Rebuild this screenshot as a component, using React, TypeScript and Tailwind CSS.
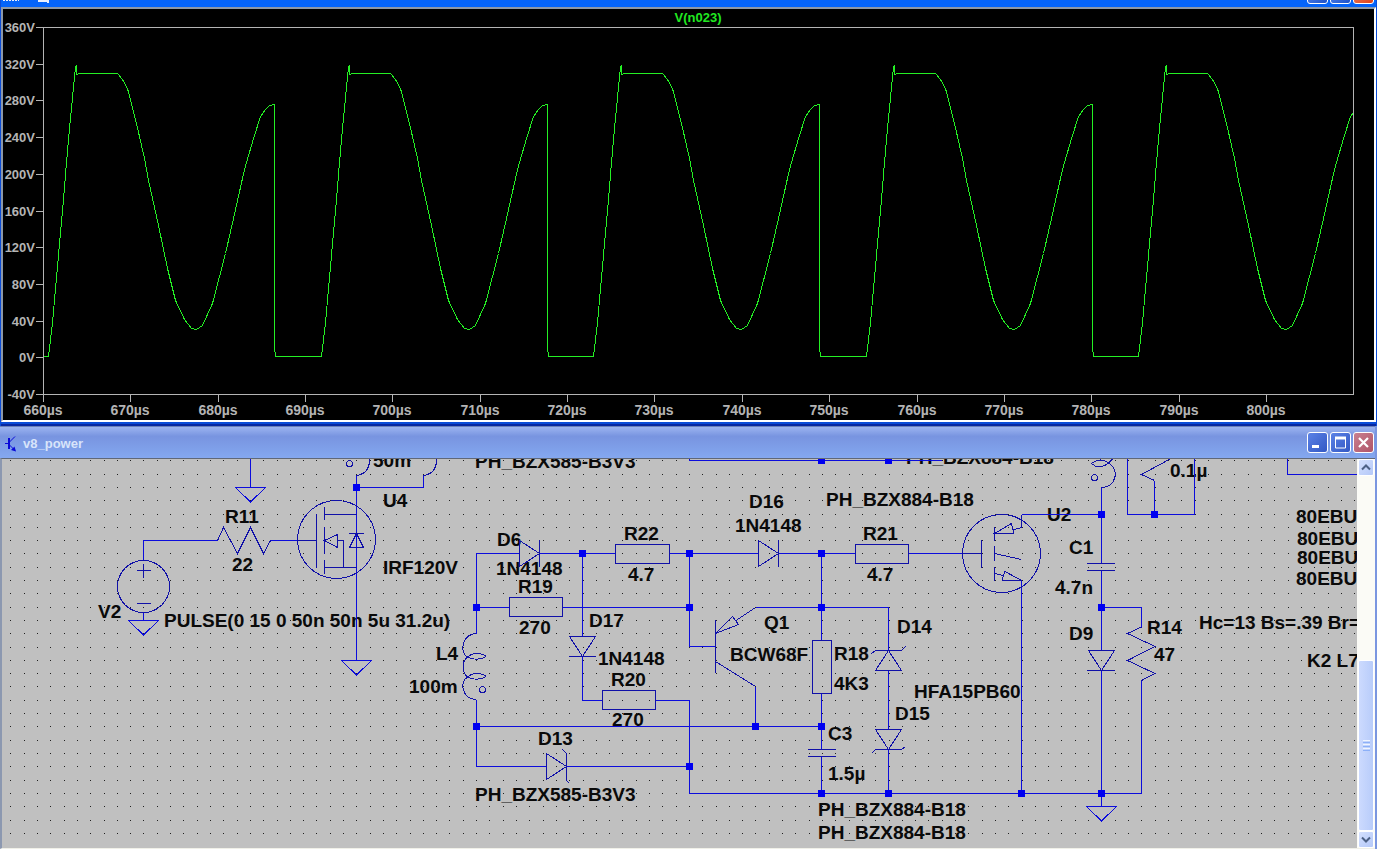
import { ReactNode } from 'react';

type Label = [ number, number, string ];
type Point = [ number, number ];

const voltTicks = [ 360, 320, 280, 240, 200, 160, 120, 80, 40, 0, -40 ];
const timeTicks = [ 660, 670, 680, 690, 700, 710, 720, 730, 740, 750, 760, 770, 780, 790, 800 ];

// One switching cycle of V(n023)
const cycle: Point[] = [
    [ 48, 356 ], [ 52, 322 ], [ 57, 266 ], [ 60, 232 ], [ 63, 199 ], [ 66, 162 ], [ 69, 128 ], [ 75, 66 ], [ 76, 65 ],
    [ 76, 74 ], [ 79, 73 ], [ 117, 73 ], [ 122, 79 ], [ 127, 88 ], [ 136, 123 ], [ 144, 158 ], [ 148, 180 ],
    [ 158, 225 ], [ 167, 268 ], [ 175, 300 ], [ 184, 319 ], [ 191, 328 ], [ 196, 329 ], [ 202, 325 ], [ 212, 303 ],
    [ 225, 253 ], [ 233, 218 ], [ 244, 169 ], [ 253, 138 ], [ 260, 116 ], [ 265, 109 ], [ 269, 105 ], [ 274, 104 ],
    [ 274, 346 ], [ 275, 356 ],
];
const period = 272.5;

const tracePoints = [ 0, 1, 2, 3, 4 ]
    .flatMap( ( n ) => cycle.map( ( [ x, y ] ) => `${ Math.round( x + n * period ) + 0.5 },${ y + 0.5 }` ) )
    .join( ' ' );

// Snap grid of the schematic sheet
const pitch = 13.305;
const gridDots = () =>
{
    let d = '';
    for ( let row = 0; row < 29; row++ )
    {
        for ( let col = 0; col < 102; col++ )
        {
            const x = Math.floor( 10.9 + col * pitch );
            const y = Math.floor( 460.8 + row * pitch );
            d += `M${ x } ${ y }h1v1h-1z`;
        }
    }
    return d;
};

const wires = [
    'M250.5 459V487.5',
    'M143.5 560V540.5H217.5',
    'M270.5 540.5H298',
    'M143.5 613V620.5',
    'M356.5 475V660.5',
    'M356.5 487.5H423.5V475',
    'M519.5 553.5H476.5V633.5',
    'M539.5 553.5H615.5M669.5 553.5H758.5M778.5 553.5H855.5M908.5 553.5H963',
    'M476.5 607.5H509.5M562.5 607.5H689.5',
    'M582.5 553.5V636.5M582.5 656.5V700.5H602.5',
    'M655.5 700.5H689.5V793.5H1141.5V680.5',
    'M476.5 699.5V766.5H546.5M566.5 766.5H689.5',
    'M476.5 726.5H821.5',
    'M689.5 553.5V646.5H715.5',
    'M755.5 607.5H888.5V650.5',
    'M755.5 686.5V726.5',
    'M821.5 553.5V640.5M821.5 693.5V749.5M821.5 756.5V793.5',
    'M888.5 670.5V729.5M888.5 749.5V793.5',
    'M1101.5 514.5H1021.5M1021.5 580.5V793.5',
    'M1101.5 487.5V563.5M1101.5 570.5V650.5M1101.5 670.5V806.5',
    'M1101.5 607.5H1141.5V626.5',
    'M1127.5 459V514.5H1194.5V459',
    'M1154.5 514.5V480.5',
    'M689.5 459V460.5H942',
    'M1287.5 459V474.5H1357',
];

const symbols = [
    // V2
    'M137 570.5H151M143.5 564V578M137 603.5H151',
    // R11
    'M217.5 540.5L223.5 527.5L237.5 553.5L250.5 527.5L263.5 553.5L270.5 540.5',
    // U4
    'M298 540.5H316.5M316.5 514V568M324.5 507V520M324.5 527V554M324.5 560V574',
    'M324.5 514.5H356.5M324.5 567.5H356.5M343.5 567.5V540.5H337.5',
    'M324.5 540.5L337.5 534.5V547.5ZM349 533.5H364M356.5 533.5L349.5 547.5H363.5Z',
    // coils cut by the top edge
    'M356.5 475.5C366 474 370 467 369.5 458M423.5 475.5C433 474 437 467 436.5 458',
    'M1091.5 463.5Q1101 472 1112.5 459M1091.5 463.5Q1101 456 1110.5 464.5C1119 471 1116 487 1101.5 487.5',
    // L4
    'M476.5 633.5C462 634 459 653 467.5 657C472 660 481 660 486.5 656.5',
    'M486.5 656.5C482 652.5 472 652.5 467.5 657C461 662 462 673 467.5 677C472 680 481 680 486.5 676.5',
    'M486.5 676.5C482 672.5 472 672.5 467.5 677C459 682 462 699 476.5 699.5',
    // diodes
    'M519.5 540.5V566.5L539.5 553.5ZM539.5 540V567',
    'M758.5 540.5V566.5L778.5 553.5ZM778.5 540V567',
    'M569.5 636.5H595.5L582.5 656.5ZM569 656.5H596',
    'M1088.5 650.5H1114.5L1101.5 670.5ZM1087 670.5H1115',
    // zeners
    'M546.5 753.5V779.5L566.5 766.5ZM562.5 749.5L566.5 753.5V780.5L569.5 783.5',
    'M875.5 670.5H901.5L888.5 650.5ZM871.5 653.5L875.5 650.5H901.5L905.5 646.5',
    'M875.5 729.5H901.5L888.5 749.5ZM871.5 753.5L875.5 749.5H901.5L905.5 746.5',
    // Q1
    'M715.5 620V673M715.5 633.5L732.5 616.5L738.5 624.5ZM736 620.5L755.5 607.5M715.5 661.5L755.5 686.5',
    // capacitors
    'M808 749.5H836M808 756.5H836M1087 563.5H1115M1087 570.5H1115',
    // U2
    'M963 553.5H981.5M981.5 540V568M994.5 527V541M994.5 546V561M994.5 567V581',
    'M1021.5 514.5V527.5L1013 530M994.5 533.5L1011.5 523.5L1014 533.5ZM994.5 553.5L1021.5 559.5',
    'M994.5 573.5L1003 575.5M1021.5 580.5L1005 571.5L1002 580Z',
    // R14 and the zigzag beside it
    'M1141.5 626.5V627L1127.5 633.5L1155 646.5L1127.5 660.5L1155 673.5L1141.5 680.5',
    'M1154.5 480.5L1141.5 474.5L1170 459',
];

const grounds: Point[] = [ [ 250, 487 ], [ 143, 620 ], [ 356, 660 ], [ 1101, 806 ] ];

const junctions: Point[] = [
    [ 356, 487 ], [ 476, 607 ], [ 476, 726 ], [ 582, 553 ], [ 689, 553 ], [ 689, 607 ], [ 689, 766 ], [ 755, 726 ],
    [ 821, 460 ], [ 888, 460 ], [ 821, 553 ], [ 821, 607 ], [ 821, 726 ], [ 821, 793 ], [ 888, 793 ], [ 1021, 793 ],
    [ 1101, 514 ], [ 1154, 514 ], [ 1101, 607 ], [ 1101, 793 ],
];

const labels: Label[] = [
    [ 373, 467, '50m' ],
    [ 475, 468, 'PH_BZX585-B3V3' ],
    [ 906, 464, 'PH_BZX884-B18' ],
    [ 383, 507, 'U4' ],
    [ 225, 523, 'R11' ],
    [ 232, 571, '22' ],
    [ 383, 574, 'IRF120V' ],
    [ 98, 618, 'V2' ],
    [ 164, 627, 'PULSE(0 15 0 50n 50n 5u 31.2u)' ],
    [ 436, 660, 'L4' ],
    [ 409, 693, '100m' ],
    [ 497, 546, 'D6' ],
    [ 496, 575, '1N4148' ],
    [ 624, 540, 'R22' ],
    [ 628, 581, '4.7' ],
    [ 518, 593, 'R19' ],
    [ 519, 634, '270' ],
    [ 589, 627, 'D17' ],
    [ 598, 665, '1N4148' ],
    [ 611, 686, 'R20' ],
    [ 612, 726, '270' ],
    [ 538, 745, 'D13' ],
    [ 475, 801, 'PH_BZX585-B3V3' ],
    [ 749, 508, 'D16' ],
    [ 735, 532, '1N4148' ],
    [ 826, 506, 'PH_BZX884-B18' ],
    [ 863, 540, 'R21' ],
    [ 867, 581, '4.7' ],
    [ 764, 629, 'Q1' ],
    [ 730, 661, 'BCW68F' ],
    [ 834, 660, 'R18' ],
    [ 834, 690, '4K3' ],
    [ 897, 633, 'D14' ],
    [ 914, 698, 'HFA15PB60' ],
    [ 895, 720, 'D15' ],
    [ 828, 740, 'C3' ],
    [ 828, 780, '1.5µ' ],
    [ 818, 816, 'PH_BZX884-B18' ],
    [ 818, 839, 'PH_BZX884-B18' ],
    [ 1047, 521, 'U2' ],
    [ 1069, 554, 'C1' ],
    [ 1055, 594, '4.7n' ],
    [ 1069, 640, 'D9' ],
    [ 1147, 634, 'R14' ],
    [ 1154, 661, '47' ],
    [ 1170, 477, '0.1µ' ],
    [ 1296, 523, '80EBU06' ],
    [ 1297, 545, '80EBU06' ],
    [ 1297, 564, '80EBU06' ],
    [ 1296, 585, '80EBU06' ],
    [ 1199, 629, 'Hc=13 Bs=.39 Br=' ],
    [ 1307, 667, 'K2 L7' ],
];

const Waveform = () => (
    <svg
        viewBox="3 9 1371 411"
        className="block h-auto w-full bg-black font-['Liberation_Sans',sans-serif] text-[13px] font-bold"
        shapeRendering="crispEdges"
    >
        <text x="698" y="22" textAnchor="middle" fill="#20e820">V(n023)</text>
        <rect x="43.5" y="27.5" width="1310" height="367" fill="none" stroke="#b4b4b4" />
        { voltTicks.map( ( volt, i ) =>
        {
            const y = Math.round( 27 + i * 36.7 );
            return (
                <g key={ volt }>
                    <path d={ `M36 ${ y + 0.5 }H43` } stroke="#b4b4b4" />
                    <text x="35" y={ y + 5 } textAnchor="end" fill="#b4b4b4">{ `${ volt }V` }</text>
                </g>
            );
        } ) }
        { timeTicks.map( ( time, i ) =>
        {
            const x = Math.round( 43 + i * 87.35 );
            return (
                <g key={ time }>
                    <path d={ `M${ x + 0.5 } 395V402` } stroke="#b4b4b4" />
                    <text x={ x } y="415" textAnchor="middle" fill="#b4b4b4" className="text-[14px]">{ `${ time }µs` }</text>
                </g>
            );
        } ) }
        <clipPath id="plot-area">
            <rect x="43" y="27" width="1310" height="368" />
        </clipPath>
        <polyline
            points={ `43.5,356.5 ${ tracePoints }` }
            fill="none"
            stroke="#24f024"
            clipPath="url(#plot-area)"
        />
    </svg>
);

const Schematic = () => (
    <svg
        width="1355"
        height="389"
        viewBox="2 459 1355 389"
        className="block max-w-none font-['Liberation_Sans',sans-serif] text-[19px] font-bold"
        shapeRendering="crispEdges"
    >
        <path d={ gridDots() } fill="#202020" />
        { labels.map( ( [ x, y, text ] ) => (
            <text key={ `${ x }-${ y }` } x={ x } y={ y } fill="#0a0a0a">{ text }</text>
        ) ) }
        <path d={ wires.join( '' ) } fill="none" stroke="#0c0cdc" />
        <g fill="none" stroke="#1010a8">
            <path d={ symbols.join( '' ) } />
            <circle cx="143.5" cy="586.5" r="26" />
            <circle cx="336.5" cy="539.5" r="39" />
            <circle cx="1001.5" cy="553.5" r="39" />
            <circle cx="349.5" cy="463.5" r="3" />
            <circle cx="482.5" cy="689.5" r="3" />
            <circle cx="1094.5" cy="477.5" r="3" />
            <rect x="615.5" y="544.5" width="54" height="19" />
            <rect x="855.5" y="544.5" width="53" height="19" />
            <rect x="509.5" y="597.5" width="53" height="19" />
            <rect x="602.5" y="690.5" width="53" height="19" />
            <rect x="812.5" y="640.5" width="19" height="53" />
        </g>
        { grounds.map( ( [ x, y ] ) => (
            <path key={ x } d={ `M${ x - 14.5 } ${ y + 0.5 }H${ x + 15.5 }L${ x + 0.5 } ${ y + 15 }Z` } fill="none" stroke="#0c0cdc" />
        ) ) }
        { junctions.map( ( [ x, y ] ) => (
            <rect key={ `${ x }-${ y }` } x={ x - 3 } y={ y - 3 } width="7" height="7" fill="#0000f0" />
        ) ) }
    </svg>
);

const CaptionButton = ( { label, className, children }: { label: string; className: string; children: ReactNode } ) => (
    <button aria-label={ label } className={ `h-[21px] w-[21px] rounded-[3px] border border-white ${ className }` }>
        <svg viewBox="0 0 19 19" className="block h-full w-full" fill="none" stroke="#fff">{ children }</svg>
    </button>
);

const CaptionButtons = ( { active }: { active?: boolean } ) =>
{
    const blue = active
        ? 'bg-linear-to-br from-[#5b8cf0] to-[#1c50c8]'
        : 'bg-linear-to-br from-[#5c82e6] to-[#3358c4]';
    const red = active
        ? 'bg-linear-to-br from-[#e88060] to-[#e04010]'
        : 'bg-linear-to-br from-[#c88090] to-[#b05468]';
    return (
        <div className="flex gap-[2px]">
            <CaptionButton label="Minimize" className={ blue }>
                <path d="M4 13.5h7" strokeWidth="3" />
            </CaptionButton>
            <CaptionButton label="Maximize" className={ blue }>
                <path d="M4 5h11" strokeWidth="3" />
                <path d="M4.5 5v10h10V5" />
            </CaptionButton>
            <CaptionButton label="Close" className={ red }>
                <path d="M5 5l9 9M14 5l-9 9" strokeWidth="2.2" />
            </CaptionButton>
        </div>
    );
};

const ScrollButton = ( { label, d }: { label: string; d: string } ) => (
    <button
        aria-label={ label }
        className="h-[17px] w-full shrink-0 rounded-[2px] border border-white bg-linear-to-br from-[#d4e0fe] to-[#b4c8f8]"
    >
        <svg viewBox="0 0 14 15" className="block h-full w-full" fill="none" stroke="#4d6185" strokeWidth="2">
            <path d={ d } />
        </svg>
    </button>
);

const App = () =>
{
    return (
        <div className="flex min-h-screen flex-col overflow-hidden bg-[#c0c0c0] font-['Liberation_Sans',sans-serif]">
            <section className="border-r border-l border-[#0a4cd8] bg-[#0a4cd8]">
                <header className="flex h-[7px] items-end justify-between overflow-hidden bg-[#0464fa] pr-[2px] pb-[3px]">
                    <svg width="60" height="4" viewBox="0 0 60 4" fill="none" stroke="#e8f0ff">
                        <path d="M2 .5h16" strokeDasharray="2 1" />
                        <path d="M37 1h10M47 0v3" strokeWidth="2" />
                    </svg>
                    <CaptionButtons active />
                </header>
                <div className="border-2 border-t-[#8c98a8] border-r-white border-b-white border-l-[#8c98a8]">
                    <Waveform />
                </div>
                <div className="h-[4px] border-b-2 border-[#0828a0] bg-[#0a4cd8]" />
            </section>

            <section className="flex flex-1 flex-col border-r-2 border-[#7a96e0] bg-[#7a96e0]">
                <header className="flex h-[32px] items-center justify-between border-t border-[#6a80b8] bg-linear-to-b from-[#9cb4f0] via-[#7894e0] via-30% to-[#84a8f0] pr-px pl-[4px]">
                    <div className="flex items-center gap-[3px] pt-[2px]">
                        <svg width="16" height="16" viewBox="0 0 16 16" fill="none" stroke="#0808d8">
                            <path d="M1 7.500h4M11 .5L5.500 6M5.500 9l5 5" />
                            <path d="M5 2v11" strokeWidth="2" />
                            <path d="M12 15.500l-1.500-5L7 14z" fill="#0808d8" stroke="none" />
                        </svg>
                        <h1 className="text-[13px] font-bold text-[#d8e4fa]">v8_power</h1>
                    </div>
                    <CaptionButtons />
                </header>
                <div className="flex flex-1 border-t border-b border-l-2 border-t-[#606878] border-b-[#f0f0e8] border-l-[#8c98b0]">
                    <div className="min-w-0 flex-1 overflow-hidden bg-[#c0c0c0]">
                        <Schematic />
                    </div>
                    <div className="flex w-[18px] shrink-0 flex-col bg-[#fbfbf6] px-px">
                        <ScrollButton label="Scroll up" d="M3 9.500l4-4 4 4" />
                        <div className="grow-[185]" />
                        <div className="flex grow-[159] flex-col items-center justify-center gap-px rounded-[2px] border border-white bg-linear-to-r from-[#ccdafe] to-[#b8ccfa]">
                            <span className="h-px w-[7px] bg-[#eef4ff]" />
                            <span className="h-px w-[7px] bg-[#8cb0f8]" />
                            <span className="h-px w-[7px] bg-[#eef4ff]" />
                            <span className="h-px w-[7px] bg-[#8cb0f8]" />
                            <span className="h-px w-[7px] bg-[#eef4ff]" />
                            <span className="h-px w-[7px] bg-[#8cb0f8]" />
                        </div>
                        <ScrollButton label="Scroll down" d="M3 5.500l4 4 4-4" />
                    </div>
                </div>
            </section>
        </div>
    );
};

export default App;
